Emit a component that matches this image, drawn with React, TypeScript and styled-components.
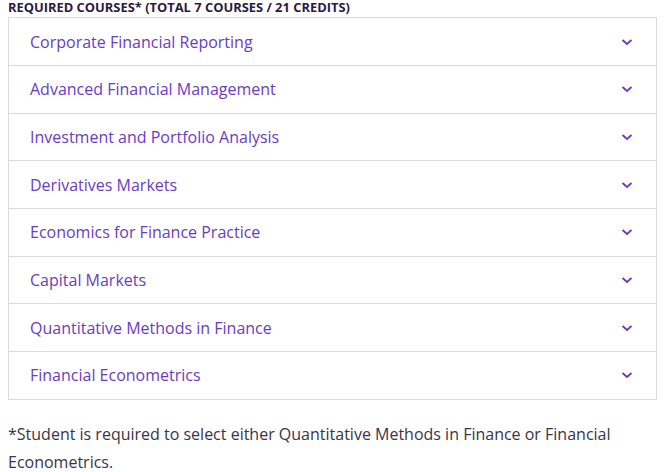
import React from "react";
import styled, { createGlobalStyle } from "styled-components";

const Global = createGlobalStyle`
  html, body { margin: 0; padding: 0; background: #ffffff; }
  body { font-family: "Open Sans", "Noto Sans", sans-serif; }
`;

const Page = styled.div`
  padding: 0 7px 0 8px;
  width: 664px;
  box-sizing: border-box;
`;

const Heading = styled.h4`
  margin: 0 0 2px;
  font-size: 12.9px;
  line-height: 15px;
  font-weight: 700;
  color: #2b1a45;
  text-transform: uppercase;
`;

const List = styled.div`
  border: 1px solid #dcdcdc;
  display: flex;
  flex-direction: column;
`;

const Row = styled.div<{ $first?: boolean }>`
  display: flex;
  align-items: center;
  justify-content: space-between;
  box-sizing: border-box;
  height: ${(p) => (p.$first ? "47px" : "47.7px")};
  padding: 0 23px 0 21px;
  border-top: ${(p) => (p.$first ? "none" : "1px solid #dcdcdc")};
`;

const Title = styled.span`
  font-size: 16px;
  color: #6a3cc4;
`;

const Chevron = styled.svg`
  width: 12px;
  height: 8px;
  flex: none;
`;

const Note = styled.p`
  margin: 20px 0 0;
  font-size: 16px;
  line-height: 28px;
  color: #3b3347;
`;

const courses = [
  "Corporate Financial Reporting",
  "Advanced Financial Management",
  "Investment and Portfolio Analysis",
  "Derivatives Markets",
  "Economics for Finance Practice",
  "Capital Markets",
  "Quantitative Methods in Finance",
  "Financial Econometrics",
];

export default function App() {
  return (
    <>
      <Global />
      <Page>
        <Heading>Required Courses* (Total 7 Courses / 21 Credits)</Heading>
        <List>
          {courses.map((c, i) => (
            <Row key={c} $first={i === 0}>
              <Title>{c}</Title>
              <Chevron viewBox="0 0 12 8">
                <path d="M1.5 2 L6 6 L10.5 2" fill="none" stroke="#6a3cc4" strokeWidth="1.8" />
              </Chevron>
            </Row>
          ))}
        </List>
        <Note>
          *Student is required to select either Quantitative Methods in Finance or Financial
          Econometrics.
        </Note>
      </Page>
    </>
  );
}
